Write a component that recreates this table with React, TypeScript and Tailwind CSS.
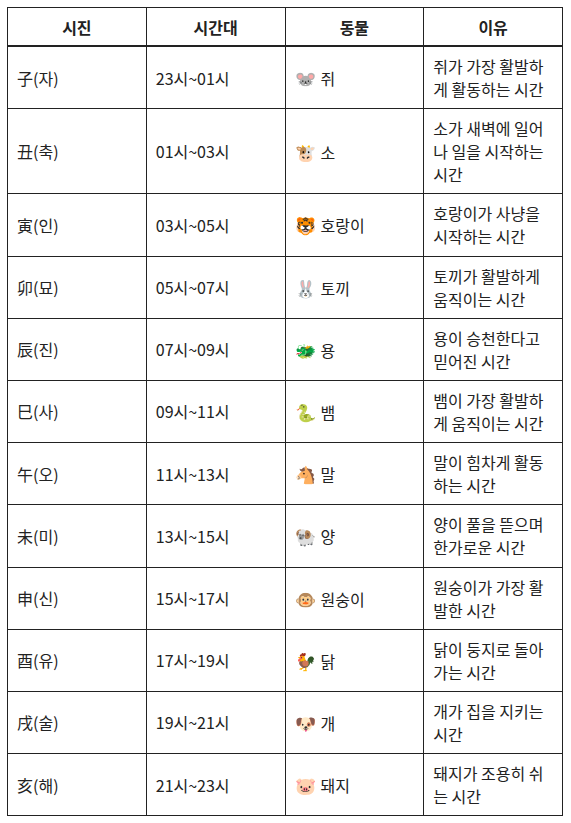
const rows = [
  { sijin: '子(자)', time: '23시~01시', emoji: '🐭', animal: '쥐', reason: '쥐가 가장 활발하게 활동하는 시간' },
  { sijin: '丑(축)', time: '01시~03시', emoji: '🐮', animal: '소', reason: '소가 새벽에 일어나 일을 시작하는 시간' },
  { sijin: '寅(인)', time: '03시~05시', emoji: '🐯', animal: '호랑이', reason: '호랑이가 사냥을 시작하는 시간' },
  { sijin: '卯(묘)', time: '05시~07시', emoji: '🐰', animal: '토끼', reason: '토끼가 활발하게 움직이는 시간' },
  { sijin: '辰(진)', time: '07시~09시', emoji: '🐲', animal: '용', reason: '용이 승천한다고 믿어진 시간' },
  { sijin: '巳(사)', time: '09시~11시', emoji: '🐍', animal: '뱀', reason: '뱀이 가장 활발하게 움직이는 시간' },
  { sijin: '午(오)', time: '11시~13시', emoji: '🐴', animal: '말', reason: '말이 힘차게 활동하는 시간' },
  { sijin: '未(미)', time: '13시~15시', emoji: '🐏', animal: '양', reason: '양이 풀을 뜯으며 한가로운 시간' },
  { sijin: '申(신)', time: '15시~17시', emoji: '🐵', animal: '원숭이', reason: '원숭이가 가장 활발한 시간' },
  { sijin: '酉(유)', time: '17시~19시', emoji: '🐓', animal: '닭', reason: '닭이 둥지로 돌아가는 시간' },
  { sijin: '戌(술)', time: '19시~21시', emoji: '🐶', animal: '개', reason: '개가 집을 지키는 시간' },
  { sijin: '亥(해)', time: '21시~23시', emoji: '🐷', animal: '돼지', reason: '돼지가 조용히 쉬는 시간' },
];

const cell = 'border border-[#222] px-[9px] pt-[8px] pb-[7.2px] align-middle';

export default function App() {
  return (
    <div className="bg-white p-[7px] font-['Noto_Sans_CJK_KR',sans-serif] text-[16px] leading-[23px] text-[#222]">
      <table className="w-[556px] table-fixed border-collapse">
        <thead>
          <tr>
            {['시진', '시간대', '동물', '이유'].map((h) => (
              <th key={h} className="border border-[#222] border-b-2 px-[9px] pt-[8px] pb-[6px] text-center font-bold">
                {h}
              </th>
            ))}
          </tr>
        </thead>
        <tbody>
          {rows.map((r) => (
            <tr key={r.sijin}>
              <td className={cell}>{r.sijin}</td>
              <td className={cell}>{r.time}</td>
              <td className={cell}>
                <span className="mr-[5px] text-[17px]">{r.emoji}</span>
                {r.animal}
              </td>
              <td className={cell}>{r.reason}</td>
            </tr>
          ))}
        </tbody>
      </table>
    </div>
  );
}
